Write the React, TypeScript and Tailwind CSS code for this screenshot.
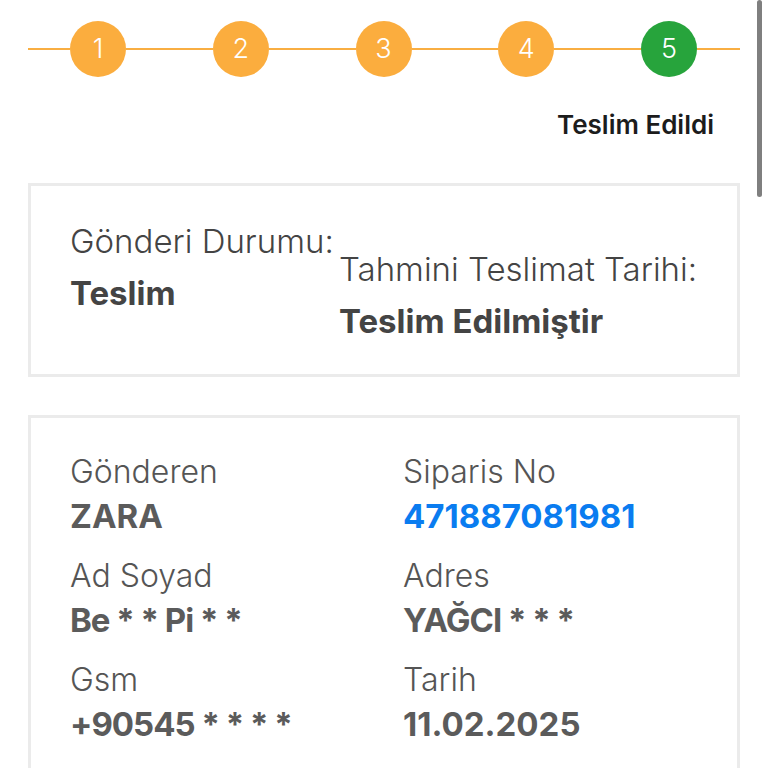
import React from 'react';

const steps = [1, 2, 3, 4, 5];

function Stepper() {
  return (
    <div className="flex items-center h-[56px] mt-[21px]">
      <div className="w-[42px] h-[2px] bg-[#f9ae42]" />
      {steps.map((n, i) => (
        <React.Fragment key={n}>
          <div
            className={`w-[56px] h-[56px] rounded-full flex items-center justify-center text-white text-[27px] font-light ${
              n === 5 ? 'bg-[#27a43c]' : 'bg-[#fbad3e]'
            }`}
          >
            {n}
          </div>
          {i < steps.length - 1 ? (
            <div className="flex-1 h-[2px] bg-[#f9ae42]" />
          ) : (
            <div className="w-[43px] h-[2px] bg-[#f9ae42]" />
          )}
        </React.Fragment>
      ))}
    </div>
  );
}

function Field({ label, value, blue, masked }: { label: string; value: string; blue?: boolean; masked?: boolean }) {
  return (
    <div className="flex flex-col">
      <span className="text-[32px] leading-[36px] text-[#555] font-light whitespace-nowrap">{label}</span>
      <span
        className={`mt-[8px] text-[33px] leading-[36px] font-bold whitespace-nowrap ${
          blue ? 'text-[#0a7cf0]' : 'text-[#5b5b5b]'
        } ${masked ? 'tracking-[-1px]' : ''}`}
      >
        {value}
      </span>
    </div>
  );
}

export default function App() {
  return (
    <div
      className="relative w-[768px] h-[768px] overflow-hidden bg-white px-[28px]"
      style={{ fontFamily: 'Inter, "Noto Sans", sans-serif' }}
    >
      {/* scrollbar */}
      <div className="absolute right-[6px] top-0 w-[5px] h-[197px] rounded-full bg-[#7f7f7f]" />

      <Stepper />

      <div className="flex justify-end pr-[26px] mt-[33px]">
        <span className="text-[26px] leading-[30px] font-semibold text-[#1c1c1c]">Teslim Edildi</span>
      </div>

      {/* status box */}
      <div className="mt-[43px] h-[194px] border-[3px] border-[#ebebeb] pl-[39px] pt-[37px] flex">
        <div className="w-[269px] flex flex-col">
          <span className="text-[33px] leading-[36px] text-[#444] font-light whitespace-nowrap">Gönderi Durumu:</span>
          <span className="mt-[16px] text-[33px] leading-[36px] font-bold text-[#444]">Teslim</span>
        </div>
        <div className="flex flex-col mt-[28px]">
          <span className="text-[33px] leading-[36px] text-[#444] font-light whitespace-nowrap">Tahmini Teslimat Tarihi:</span>
          <span className="mt-[16px] text-[33px] leading-[36px] font-bold text-[#444] whitespace-nowrap">Teslim Edilmiştir</span>
        </div>
      </div>

      {/* details box */}
      <div className="mt-[38px] h-[400px] border-[3px] border-[#ebebeb] pl-[39px] pt-[36px]">
        <div className="grid grid-cols-[333px_1fr] gap-y-[24px]">
          <Field label="Gönderen" value="ZARA" />
          <Field label="Siparis No" value="471887081981" blue />
          <Field label="Ad Soyad" value="Be * * Pi * *" masked />
          <Field label="Adres" value="YAĞCI * * *" masked />
          <Field label="Gsm" value="+90545 * * * *" masked />
          <Field label="Tarih" value="11.02.2025" />
        </div>
      </div>
    </div>
  );
}
